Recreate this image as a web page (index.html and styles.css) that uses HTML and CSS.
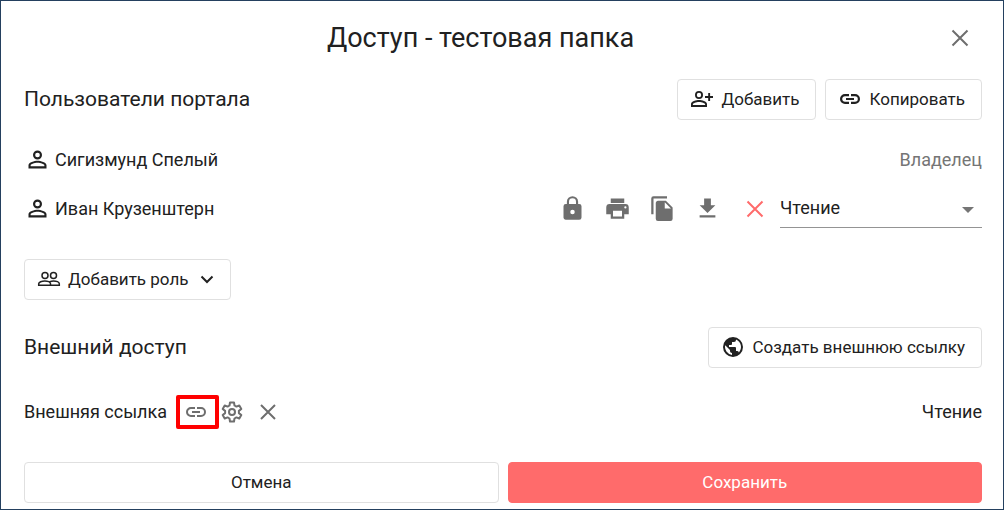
FILE: index.html
```html
<!DOCTYPE html>
<html lang="ru">
<head>
  <meta charset="UTF-8">
  <meta name="viewport" content="width=device-width, initial-scale=1.0">
  <title>Доступ - тестовая папка</title>
  <link rel="stylesheet" href="styles.css">
</head>
<body>
  <main class="dialog">
    <header class="dialog-header">
      <h1>Доступ - тестовая папка</h1>
      <button class="icon-btn close-btn" type="button" aria-label="Закрыть">
        <svg class="icon" viewBox="0 0 24 24"><path class="line" d="M4.5 4.5l15 15M19.5 4.5l-15 15"/></svg>
      </button>
    </header>

    <!-- Пользователи -->
    <section>
      <div class="section-head">
        <h2>Пользователи портала</h2>
        <div class="section-actions">
          <button class="btn" type="button">
            <svg class="icon" viewBox="0 0 24 24"><path d="M9 12a4 4 0 1 0 0-8 4 4 0 0 0 0 8zm0-6.200a2.200 2.200 0 1 1 0 4.400 2.200 2.200 0 0 1 0-4.400zM9 13c-2.670 0-8 1.340-8 4v3h16v-3c0-2.660-5.330-4-8-4zm6.100 5.100H2.900V17c0-.64 3.130-2.100 6.100-2.100s6.100 1.460 6.100 2.100v1.100zM18.200 6v3H15v1.900h3.200V14h1.900v-3.100H23V9h-2.900V6z"/></svg>
            <span>Добавить</span>
          </button>
          <button class="btn" type="button">
            <svg class="icon" viewBox="0 0 24 24"><path d="M4.200 12c0-1.540 1.260-2.800 2.800-2.800h4V7H7a5 5 0 0 0 0 10h4v-2.200H7c-1.540 0-2.800-1.260-2.800-2.800zM8 13.100h8v-2.200H8v2.200zM17 7h-4v2.200h4a2.800 2.800 0 0 1 0 5.600h-4V17h4a5 5 0 0 0 0-10z"/></svg>
            <span>Копировать</span>
          </button>
        </div>
      </div>

      <ul class="users">
        <li class="user">
          <svg class="icon-lg" viewBox="0 0 24 24"><path d="M12 5.900a2.100 2.100 0 1 1 0 4.200 2.100 2.100 0 0 1 0-4.200m0 9c2.970 0 6.100 1.460 6.100 2.100v1.100H5.900V17c0-.64 3.130-2.100 6.100-2.100M12 4a4 4 0 1 0 0 8 4 4 0 0 0 0-8zm0 9c-2.670 0-8 1.340-8 4v3h16v-3c0-2.660-5.330-4-8-4z"/></svg>
          <span class="user-name">Сигизмунд Спелый</span>
          <span class="muted">Владелец</span>
        </li>
        <li class="user">
          <svg class="icon-lg" viewBox="0 0 24 24"><path d="M12 5.900a2.100 2.100 0 1 1 0 4.200 2.100 2.100 0 0 1 0-4.200m0 9c2.970 0 6.100 1.460 6.100 2.100v1.100H5.900V17c0-.64 3.130-2.100 6.100-2.100M12 4a4 4 0 1 0 0 8 4 4 0 0 0 0-8zm0 9c-2.670 0-8 1.340-8 4v3h16v-3c0-2.660-5.330-4-8-4z"/></svg>
          <span class="user-name">Иван Крузенштерн</span>
          <div class="user-tools">
            <button class="icon-btn" type="button" aria-label="Блокировка">
              <svg class="icon-lg" viewBox="0 0 24 24"><path d="M18 8h-1V6A5 5 0 0 0 7 6v2H6a2 2 0 0 0-2 2v10c0 1.100.9 2 2 2h12a2 2 0 0 0 2-2V10a2 2 0 0 0-2-2zm-6 9a2 2 0 1 1 0-4 2 2 0 0 1 0 4zm3.100-9H8.900V6a3.100 3.100 0 0 1 6.200 0v2z"/></svg>
            </button>
            <button class="icon-btn" type="button" aria-label="Печать">
              <svg class="icon-lg" viewBox="0 0 24 24"><path d="M19 8H5a3 3 0 0 0-3 3v6h4v4h12v-4h4v-6a3 3 0 0 0-3-3zm-3 11H8v-5h8v5zm3-7a1 1 0 1 1 0-2 1 1 0 0 1 0 2zm-1-9H6v4h12V3z"/></svg>
            </button>
            <button class="icon-btn" type="button" aria-label="Копирование">
              <svg class="icon-lg" viewBox="0 0 24 24"><path d="M16 1H4a2 2 0 0 0-2 2v14h2V3h12V1zm-1 4l6 6v10a2 2 0 0 1-2 2H7.990A2 2 0 0 1 6 21l.010-14c0-1.100.89-2 1.990-2h7zm-1 7h5.500L14 6.500V12z"/></svg>
            </button>
            <button class="icon-btn" type="button" aria-label="Скачивание">
              <svg class="icon-lg" viewBox="0 0 24 24"><path d="M19 9h-4V3H9v6H5l7 7 7-7zM5 18v2h14v-2H5z"/></svg>
            </button>
          </div>
          <button class="icon-btn danger" type="button" aria-label="Удалить пользователя">
            <svg class="icon" viewBox="0 0 24 24"><path class="line" d="M4.500 4.500l15 15M19.500 4.500l-15 15"/></svg>
          </button>
          <div class="select">
            <select aria-label="Права доступа">
              <option>Чтение</option>
              <option>Запись</option>
            </select>
            <svg class="select-arrow" viewBox="0 0 12 6"><path d="M0 0h12L6 6z"/></svg>
          </div>
        </li>
      </ul>

      <button class="btn role-btn" type="button">
        <svg class="icon" viewBox="0 0 24 24"><g class="thin"><circle cx="8" cy="8.500" r="3"/><circle cx="16.500" cy="8.500" r="3"/><path d="M1.700 18.300v-1.500c0-1.700 3.200-2.900 6.100-2.900s5.700 1.200 5.700 2.900v1.500zM12.800 14.700c1.100-.5 2.500-.8 3.700-.8 2.900 0 5.800 1.200 5.800 2.900v1.500h-8.800"/></g></svg>
        <span>Добавить роль</span>
        <svg class="icon" viewBox="0 0 24 24"><path class="line" d="M6.500 9.500l5.500 5.500 5.500-5.500"/></svg>
      </button>
    </section>

    <!-- Внешние ссылки -->
    <section class="external">
      <div class="section-head">
        <h2>Внешний доступ</h2>
        <button class="btn" type="button">
          <svg class="icon" viewBox="0 0 24 24"><path d="M12 2a10 10 0 1 0 0 20 10 10 0 0 0 0-20zm-1 17.930A8 8 0 0 1 4.210 10.210L9 15v1c0 1.100.9 2 2 2v1.930zm6.900-2.540A2 2 0 0 0 16 16h-1v-3a1 1 0 0 0-1-1H8v-2h2a1 1 0 0 0 1-1V7h2a2 2 0 0 0 2-2v-.41a8 8 0 0 1 2.900 12.800z"/></svg>
          <span>Создать внешнюю ссылку</span>
        </button>
      </div>

      <div class="link-row">
        <span>Внешняя ссылка</span>
        <div class="link-tools">
          <button class="icon-btn marked" type="button" aria-label="Скопировать ссылку">
            <svg class="icon" viewBox="0 0 24 24"><path d="M4 12c0-1.650 1.350-3 3-3h4V7H7a5 5 0 0 0 0 10h4v-2H7c-1.650 0-3-1.350-3-3zM8 13h8v-2H8v2zm9-6h-4v2h4a3 3 0 0 1 0 6h-4v2h4a5 5 0 0 0 0-10z"/></svg>
          </button>
          <button class="icon-btn" type="button" aria-label="Настройки ссылки">
            <svg class="icon" viewBox="0 0 24 24"><g class="gear"><circle cx="12" cy="12" r="3"/><path d="M10 2.500h4l.5 3 1.900 1.100 2.900-1.100 2 3.500-2.400 1.900v2.200l2.400 1.900-2 3.500-2.900-1.100-1.900 1.100-.5 3h-4l-.5-3-1.900-1.100-2.900 1.100-2-3.500 2.400-1.900v-2.200L2.700 9l2-3.500 2.900 1.100 1.900-1.100z"/></g></svg>
          </button>
          <button class="icon-btn" type="button" aria-label="Удалить ссылку">
            <svg class="icon" viewBox="0 0 24 24"><path class="line" d="M5 5l14 14M19 5L5 19"/></svg>
          </button>
        </div>
        <span class="link-rights">Чтение</span>
      </div>
    </section>

    <footer class="dialog-footer">
      <button class="btn" type="button">Отмена</button>
      <button class="btn primary" type="button">Сохранить</button>
    </footer>
  </main>
</body>
</html>
```

FILE: styles.css
```css
* {
  box-sizing: border-box;
}
body {
  margin: 0;
  background: #fff;
  color: #212121;
  font-family: Roboto, sans-serif;
  font-size: 18px;
  line-height: 24px;
}
h1, h2 {
  margin: 0;
  font-weight: 400;
}
button, select {
  font: inherit;
  color: inherit;
  cursor: pointer;
}
svg {
  display: block;
  flex: none;
  fill: currentColor;
}
.dialog {
  margin: 0 1px 1px 0;
  padding: 0 21px 6px 23px;
  border: 1px solid #24405f;
}

/* Шапка */
.dialog-header {
  display: flex;
  align-items: center;
  height: 74px;
  margin-bottom: 4px;
}
.dialog-header h1 {
  flex: 1;
  font-size: 27px;
  line-height: 32px;
  text-align: center;
}
.close-btn {
  width: 45px;
}

/* Иконки */
.icon {
  width: 24px;
  height: 24px;
}
.icon-lg {
  width: 27px;
  height: 27px;
}
.line {
  fill: none;
  stroke: currentColor;
  stroke-width: 2;
}
.thin {
  fill: none;
  stroke: currentColor;
  stroke-width: 1.5;
}
.gear {
  fill: none;
  stroke: currentColor;
  stroke-width: 2;
  stroke-linejoin: round;
}
.icon-btn {
  display: flex;
  align-items: center;
  justify-content: center;
  height: 36px;
  padding: 0;
  border: none;
  background: none;
  color: #6e6e6e;
}

/* Кнопки */
.btn {
  display: flex;
  align-items: center;
  gap: 7px;
  height: 41px;
  padding: 0 16px 2px 12px;
  border: 1px solid #e0e0e0;
  border-radius: 4px;
  background: #fff;
  font-size: 17px;
}
.primary {
  border-color: #ff6b6b;
  background: #ff6b6b;
  color: #fff;
}

/* Разделы */
.section-head {
  display: flex;
  align-items: center;
  justify-content: space-between;
}
.section-head h2 {
  padding-bottom: 2px;
  font-size: 21px;
}
.section-actions {
  display: flex;
  gap: 9px;
}
.users {
  margin: 15px 0 26px;
  padding: 0;
  list-style: none;
}
.user {
  display: flex;
  align-items: center;
  height: 49px;
}
.user-name {
  flex: 1;
  margin-left: 4px;
}
.muted {
  color: #757575;
}
.user-tools {
  display: flex;
}
.user-tools .icon-btn {
  width: 45px;
}
.danger {
  width: 50px;
  color: #ff6b6b;
}
.select {
  position: relative;
  width: 202px;
}
.select select {
  width: 100%;
  height: 38px;
  padding: 0 28px 0 0;
  border: none;
  border-bottom: 1px solid #949494;
  border-radius: 0;
  background: none;
  appearance: none;
}
.select-arrow {
  position: absolute;
  top: 17px;
  right: 8px;
  width: 12px;
  height: 6px;
  color: #757575;
  pointer-events: none;
}
.role-btn {
  padding-right: 11px;
}

/* Внешний доступ */
.external {
  margin-top: 27px;
}
.link-row {
  display: flex;
  align-items: center;
  height: 88px;
}
.link-tools {
  display: flex;
  margin-left: 11px;
}
.link-tools .icon-btn {
  width: 36px;
}
.link-rights {
  margin-left: auto;
}
.marked {
  position: relative;
}
/* Красная рамка вокруг иконки ссылки */
.marked::after {
  content: "";
  position: absolute;
  inset: 1px -5px 1px -2px;
  border: 4px solid #f00;
  border-radius: 2px;
}

/* Нижние кнопки */
.dialog-footer {
  display: flex;
  gap: 9px;
  margin-top: 6px;
}
.dialog-footer .btn {
  flex: 1;
  justify-content: center;
  padding: 0 0 2px;
}
```
